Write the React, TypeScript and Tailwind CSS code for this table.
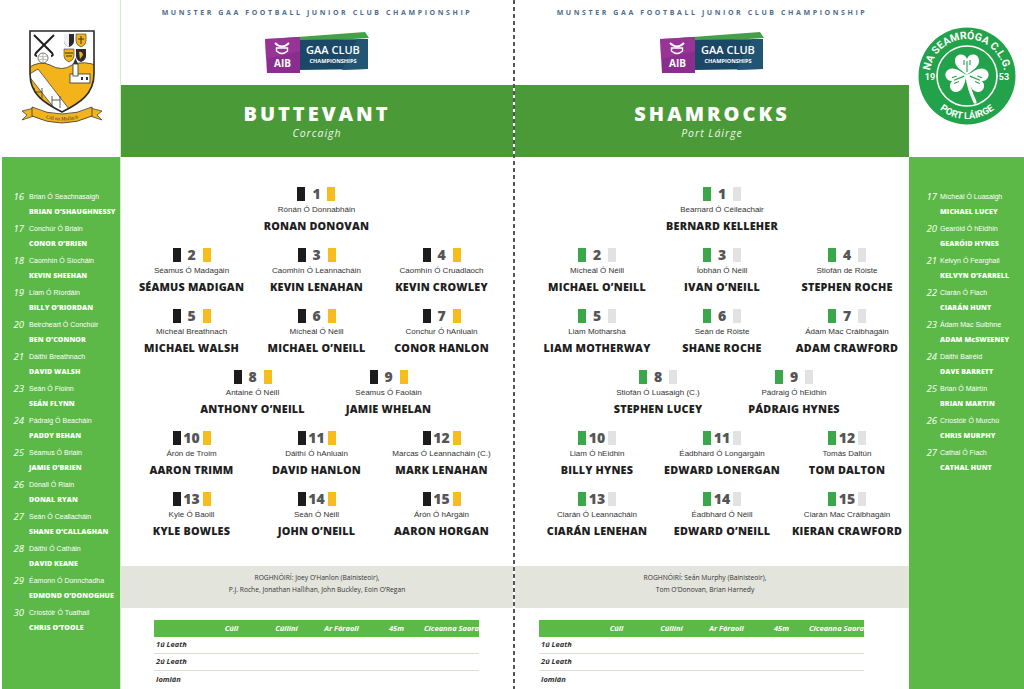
import React from "react";

type P = { n: number; ga: string; en: string };

const leftRows: P[][] = [
  [{ n: 1, ga: "Rónán Ó Donnabháin", en: "RONAN DONOVAN" }],
  [
    { n: 2, ga: "Séamus Ó Madagáin", en: "SÉAMUS MADIGAN" },
    { n: 3, ga: "Caomhín Ó Leannacháin", en: "KEVIN LENAHAN" },
    { n: 4, ga: "Caomhín Ó Cruadlaoch", en: "KEVIN CROWLEY" },
  ],
  [
    { n: 5, ga: "Mícheál Breathnach", en: "MICHAEL WALSH" },
    { n: 6, ga: "Mícheál Ó Néill", en: "MICHAEL O’NEILL" },
    { n: 7, ga: "Conchur Ó hAnluain", en: "CONOR HANLON" },
  ],
  [
    { n: 8, ga: "Antaine Ó Néill", en: "ANTHONY O’NEILL" },
    { n: 9, ga: "Séamus Ó Faoláin", en: "JAMIE WHELAN" },
  ],
  [
    { n: 10, ga: "Árón de Troim", en: "AARON TRIMM" },
    { n: 11, ga: "Dáithí Ó hAnluain", en: "DAVID HANLON" },
    { n: 12, ga: "Marcas Ó Leannacháin (C.)", en: "MARK LENAHAN" },
  ],
  [
    { n: 13, ga: "Kyle Ó Baoill", en: "KYLE BOWLES" },
    { n: 14, ga: "Seán Ó Néill", en: "JOHN O’NEILL" },
    { n: 15, ga: "Árón Ó hArgáin", en: "AARON HORGAN" },
  ],
];

const rightRows: P[][] = [
  [{ n: 1, ga: "Bearnard Ó Céileachair", en: "BERNARD KELLEHER" }],
  [
    { n: 2, ga: "Mícheál Ó Néill", en: "MICHAEL O’NEILL" },
    { n: 3, ga: "Íobhán Ó Néill", en: "IVAN O’NEILL" },
    { n: 4, ga: "Stiofán de Róiste", en: "STEPHEN ROCHE" },
  ],
  [
    { n: 5, ga: "Liam Motharsha", en: "LIAM MOTHERWAY" },
    { n: 6, ga: "Seán de Róiste", en: "SHANE ROCHE" },
    { n: 7, ga: "Ádam Mac Cráibhagáin", en: "ADAM CRAWFORD" },
  ],
  [
    { n: 8, ga: "Stiofán Ó Luasaigh (C.)", en: "STEPHEN LUCEY" },
    { n: 9, ga: "Pádraig Ó hEidhin", en: "PÁDRAIG HYNES" },
  ],
  [
    { n: 10, ga: "Liam Ó hEidhin", en: "BILLY HYNES" },
    { n: 11, ga: "Éadbhard Ó Longargáin", en: "EDWARD LONERGAN" },
    { n: 12, ga: "Tomás Daltún", en: "TOM DALTON" },
  ],
  [
    { n: 13, ga: "Ciarán Ó Leannacháin", en: "CIARÁN LENEHAN" },
    { n: 14, ga: "Éadbhard Ó Néill", en: "EDWARD O’NEILL" },
    { n: 15, ga: "Ciarán Mac Cráibhagáin", en: "KIERAN CRAWFORD" },
  ],
];

const leftSubs: P[] = [
  { n: 16, ga: "Brian Ó Seachnasaigh", en: "BRIAN O’SHAUGHNESSY" },
  { n: 17, ga: "Conchúr Ó Briain", en: "CONOR O’BRIEN" },
  { n: 18, ga: "Caomhín Ó Síocháin", en: "KEVIN SHEEHAN" },
  { n: 19, ga: "Liam Ó Ríordáin", en: "BILLY O’RIORDAN" },
  { n: 20, ga: "Beircheart Ó Conchúir", en: "BEN O’CONNOR" },
  { n: 21, ga: "Dáithí Breathnach", en: "DAVID WALSH" },
  { n: 23, ga: "Seán Ó Floinn", en: "SEÁN FLYNN" },
  { n: 24, ga: "Pádraig Ó Beacháin", en: "PADDY BEHAN" },
  { n: 25, ga: "Séamus Ó Briain", en: "JAMIE O’BRIEN" },
  { n: 26, ga: "Dónall Ó Riain", en: "DONAL RYAN" },
  { n: 27, ga: "Seán Ó Ceallacháin", en: "SHANE O’CALLAGHAN" },
  { n: 28, ga: "Dáithí Ó Catháin", en: "DAVID KEANE" },
  { n: 29, ga: "Éamonn Ó Donnchadha", en: "EDMOND O’DONOGHUE" },
  { n: 30, ga: "Críostóir Ó Tuathail", en: "CHRIS O’TOOLE" },
];

const rightSubs: P[] = [
  { n: 17, ga: "Mícheál Ó Luasaigh", en: "MICHAEL LUCEY" },
  { n: 20, ga: "Gearóid Ó hEidhin", en: "GEARÓID HYNES" },
  { n: 21, ga: "Kelvyn Ó Fearghail", en: "KELVYN O’FARRELL" },
  { n: 22, ga: "Ciarán Ó Fiach", en: "CIARÁN HUNT" },
  { n: 23, ga: "Ádam Mac Suibhne", en: "ADAM McSWEENEY" },
  { n: 24, ga: "Dáithí Bairéid", en: "DAVE BARRETT" },
  { n: 25, ga: "Brian Ó Máirtín", en: "BRIAN MARTIN" },
  { n: 26, ga: "Críostóir Ó Murchú", en: "CHRIS MURPHY" },
  { n: 27, ga: "Cathal Ó Fiach", en: "CATHAL HUNT" },
];

function Player({ p, c1, c2 }: { p: P; c1: string; c2: string }) {
  return (
    <div className="flex flex-col items-center">
      <div className="flex h-[14px] items-center">
        <span className={`block h-[14px] w-[8px] ${c1}`} />
        <span className="block w-[22px] text-center text-[14px] font-extrabold leading-[14px] text-[#555]">
          {p.n}
        </span>
        <span className={`block h-[14px] w-[8px] ${c2}`} />
      </div>
      <div className="mt-[4px] h-[10px] whitespace-nowrap font-['Liberation_Sans',sans-serif] text-[8px] leading-[10px] text-[#333]">
        {p.ga}
      </div>
      <div className="mt-[4px] h-[14px] whitespace-nowrap text-[10.8px] font-extrabold leading-[14px] tracking-[0.2px] text-[#1f1f1f]">
        {p.en}
      </div>
    </div>
  );
}

function Grid({ rows, c1, c2 }: { rows: P[][]; c1: string; c2: string }) {
  return (
    <div className="flex flex-col gap-[15px]">
      {rows.map((row, i) =>
        row.length === 3 ? (
          <div key={i} className="grid grid-cols-[125px_125px_125px] justify-center">
            {row.map((p) => (
              <Player key={p.n} p={p} c1={c1} c2={c2} />
            ))}
          </div>
        ) : row.length === 2 ? (
          <div key={i} className="flex justify-center pl-[8px]">
            {row.map((p) => (
              <div key={p.n} className="w-[136px]">
                <Player p={p} c1={c1} c2={c2} />
              </div>
            ))}
          </div>
        ) : (
          <div key={i} className="flex justify-center">
            <Player p={row[0]} c1={c1} c2={c2} />
          </div>
        )
      )}
    </div>
  );
}

function AibLogo() {
  return (
    <svg width="110" height="46" viewBox="0 0 110 46">
      <polygon points="22,9 103,3 107,9 26,14" fill="#45a149" />
      <polygon points="36,11 106,10 106,40 36,41" fill="#1b4866" />
      <polygon points="80,41 95,10 106,10 106,40" fill="#215573" />
      <polygon points="3,10 38,8 38,44 5,44" fill="#8b2d8e" />
      <polygon points="3,10 38,8 38,22 4,30" fill="#a23b9d" opacity="0.55" />
      <path d="M13 14 Q20 21 27 14" stroke="#fff" strokeWidth="1.8" fill="none" />
      <path d="M14.5 19 H25.5 V22 Q20 27 14.5 22 Z" stroke="#fff" strokeWidth="1.4" fill="none" />
      <text x="20.5" y="38" textAnchor="middle" fill="#fff" fontSize="10" fontWeight="700" fontFamily="Open Sans, sans-serif">
        AIB
      </text>
      <text x="71" y="25" textAnchor="middle" fill="#fff" fontSize="11" fontWeight="600" fontFamily="Open Sans, sans-serif">
        GAA CLUB
      </text>
      <text x="71" y="33.5" textAnchor="middle" fill="#fff" fontSize="5.6" fontWeight="700" fontFamily="Open Sans, sans-serif">
        CHAMPIONSHIPS
      </text>
    </svg>
  );
}

function ButtevantCrest() {
  const shield = "M12 3 H76 V46 C76 66 62 75 44 84 C26 75 12 66 12 46 Z";
  return (
    <svg width="90" height="98" viewBox="0 0 90 98">
      <defs>
        <clipPath id="shieldClip">
          <path d={shield} />
        </clipPath>
        <path id="ribbonText" d="M16 86 Q44 99 72 86" />
      </defs>
      <g clipPath="url(#shieldClip)">
        <rect x="0" y="0" width="90" height="90" fill="#fff" />
        <path d="M10 40 Q22 32 32 37 Q44 44 54 37 Q66 32 80 38 V90 H10 Z" fill="#f3b41b" stroke="#333" strokeWidth="0.8" />
        <path d="M10 47 L20 41 L58 90 L44 90 Z" fill="#fff" stroke="#333" strokeWidth="0.7" />
        <path d="M16 60 V70 M24 60 V70 M16 64 H24" stroke="#333" strokeWidth="0.8" />
        <path d="M34 68 V80 M42 68 V80 M34 72 H42" stroke="#333" strokeWidth="0.8" />
        <rect x="52" y="46" width="20" height="9" fill="#fff" stroke="#333" strokeWidth="0.8" />
        <rect x="55" y="36" width="5" height="12" fill="#fff" stroke="#333" strokeWidth="0.8" />
        <path d="M55 36 L57.5 30 L60 36 Z" fill="#333" />
        <rect x="63" y="49" width="2" height="3" fill="#333" />
        <rect x="68" y="49" width="2" height="3" fill="#333" />
      </g>
      <path d={shield} fill="none" stroke="#2a2a2a" strokeWidth="1.6" />
      <path d="M16 7 L34 25 Q36 28 33 28" stroke="#222" strokeWidth="2" fill="none" />
      <path d="M36 7 L18 25 Q16 28 19 28" stroke="#222" strokeWidth="2" fill="none" />
      <circle cx="25" cy="30" r="5" fill="#fff" stroke="#555" strokeWidth="0.8" />
      <path d="M21 28 Q25 30 29 28 M21 32 Q25 30 29 32 M25 25 V35" stroke="#777" strokeWidth="0.5" fill="none" />
      <path d="M46 6 H56 V13 Q56 17 51 19 Q46 17 46 13 Z" fill="#2b2b2b" />
      <path d="M46 6 H51 V19 Q46 17 46 13 Z" fill="#f0f0f0" />
      <path d="M58 6 H68 V13 Q68 17 63 19 Q58 17 58 13 Z" fill="#f3b41b" stroke="#333" strokeWidth="0.6" />
      <path d="M63 8 V16 M60 11 H66" stroke="#333" strokeWidth="1" />
      <path d="M46 21 H56 V28 Q56 32 51 34 Q46 32 46 28 Z" fill="#f3b41b" stroke="#333" strokeWidth="0.6" />
      <path d="M47 25 H55 M48 28 H54" stroke="#333" strokeWidth="1.2" />
      <path d="M58 21 H68 V28 Q68 32 63 34 Q58 32 58 28 Z" fill="#2b2b2b" />
      <path d="M61 24 Q64 23 65 27 L62 31 Z" fill="#f3b41b" />
      <path d="M16 80 L4 83 L9 87 L4 92 L16 88 Z" fill="#f3b41b" stroke="#333" strokeWidth="0.7" />
      <path d="M72 80 L84 83 L79 87 L84 92 L72 88 Z" fill="#f3b41b" stroke="#333" strokeWidth="0.7" />
      <path d="M14 79 Q44 93 74 79 L74 88 Q44 102 14 88 Z" fill="#f3b41b" stroke="#333" strokeWidth="0.8" />
      <text fontSize="5.2" fill="#333" fontFamily="Liberation Serif, serif" fontStyle="italic">
        <textPath href="#ribbonText" startOffset="50%" textAnchor="middle">
          Cill na Mullach
        </textPath>
      </text>
    </svg>
  );
}

function Leaf({ r }: { r: number }) {
  return (
    <g transform={`translate(50 49) rotate(${r})`}>
      <path
        d="M0 0 C-4 -4 -13 -8 -12 -15 C-11 -22 -2 -22 0 -16 C2 -22 11 -22 12 -15 C13 -8 4 -4 0 0 Z"
        fill="#fff"
      />
      <path d="M0 -3 V-14 M-3 -10 V-15 M3 -10 V-15" stroke="#22a24a" strokeWidth="1.1" />
    </g>
  );
}

function ShamrockCrest() {
  return (
    <svg width="100" height="100" viewBox="0 0 100 100">
      <defs>
        <path id="topArc" d="M 14.6 63 A 37.5 37.5 0 1 1 85.4 63" />
        <path id="botArc" d="M 7 50 A 43 43 0 0 0 93 50" />
      </defs>
      <circle cx="50" cy="50" r="48.5" fill="#22a24a" />
      <circle cx="50" cy="50" r="30" fill="none" stroke="#fff" strokeWidth="1.6" />
      <text fontSize="10.5" fontWeight="700" fill="#fff" fontFamily="Roboto, Arial, sans-serif">
        <textPath href="#topArc" startOffset="50%" textAnchor="middle">
          NA SEAMRÓGA C.L.G.
        </textPath>
      </text>
      <text fontSize="9.5" fontWeight="700" fill="#fff" fontFamily="Roboto, Arial, sans-serif">
        <textPath href="#botArc" startOffset="50%" textAnchor="middle">
          PORT LÁIRGE
        </textPath>
      </text>
      <text x="13" y="54" textAnchor="middle" fontSize="9" fontWeight="700" fill="#fff" fontFamily="Roboto, Arial, sans-serif">
        19
      </text>
      <text x="87" y="54" textAnchor="middle" fontSize="9" fontWeight="700" fill="#fff" fontFamily="Roboto, Arial, sans-serif">
        53
      </text>
      <path d="M50 50 Q52 64 58 76" stroke="#fff" strokeWidth="3.2" fill="none" strokeLinecap="round" />
      <Leaf r={0} />
      <Leaf r={-112} />
      <Leaf r={112} />
    </svg>
  );
}

function Sub({ p, numW, gap }: { p: P; numW: string; gap: string }) {
  return (
    <div className="flex flex-col gap-[2px]">
      <div className="flex h-[13px] items-center">
        <span className={`${numW} text-right text-[9.5px] italic leading-[13px] text-white`}>{p.n}</span>
        <span className={`${gap} whitespace-nowrap font-['Liberation_Sans',sans-serif] text-[7px] leading-[13px] text-white`}>
          {p.ga}
        </span>
      </div>
      <div className="flex h-[13px] items-center">
        <span className={numW} />
        <span className={`${gap} whitespace-nowrap text-[7px] font-extrabold leading-[13px] tracking-[0.1px] text-white`}>
          {p.en}
        </span>
      </div>
    </div>
  );
}

function ScoreTable({ ml }: { ml: string }) {
  const heads = ["Cúil", "Cúilíní", "Ar Fóraoil", "45m", "Cíceanna Saora"];
  const rows = ["1ú Leath", "2ú Leath", "Iomlán"];
  return (
    <div className={`${ml} w-[325px]`}>
      <div className="grid h-[17px] grid-cols-[50px_55px_55px_55px_55px_55px] items-center bg-[#5cb947]">
        <span />
        {heads.map((h) => (
          <span key={h} className="whitespace-nowrap text-center text-[7.5px] font-bold italic text-white">
            {h}
          </span>
        ))}
      </div>
      {rows.map((r, i) => (
        <div
          key={r}
          className={`flex h-[17px] items-center pl-[2px] text-[7.5px] font-bold italic text-[#333] ${
            i < 2 ? "border-b border-[#dcdcd4]" : ""
          }`}
        >
          {r}
        </div>
      ))}
    </div>
  );
}

function TeamMain({
  name,
  county,
  rows,
  c1,
  c2,
  gridPad,
  rogh,
  roghPad,
  tableMl,
}: {
  name: string;
  county: string;
  rows: P[][];
  c1: string;
  c2: string;
  gridPad: string;
  rogh: [string, string];
  roghPad: string;
  tableMl: string;
}) {
  return (
    <div className="flex h-full flex-col">
      <div className="flex h-[85px] flex-col items-center">
        <div className="pt-[9px] text-[7px] font-bold leading-[8px] tracking-[2.6px] text-[#4d6d8c]">
          MUNSTER GAA FOOTBALL JUNIOR CLUB CHAMPIONSHIP
        </div>
        <div className="mt-[12px]">
          <AibLogo />
        </div>
      </div>
      <div className="flex h-[72px] flex-col items-center bg-[#4a9a38] pt-[18px]">
        <div className="text-[20px] font-extrabold leading-[22px] tracking-[3px] text-white">{name}</div>
        <div className="mt-[2px] text-[10.5px] italic leading-[12px] tracking-[1px] text-[#eef6ea]">{county}</div>
      </div>
      <div className={`h-[409px] pt-[30px] ${gridPad}`}>
        <Grid rows={rows} c1={c1} c2={c2} />
      </div>
      <div className={`h-[42px] bg-[#e3e4dc] pt-[6px] text-center text-[6.7px] leading-[12px] text-[#333] ${roghPad}`}>
        <div>{rogh[0]}</div>
        <div>{rogh[1]}</div>
      </div>
      <div className="pt-[12px]">
        <ScoreTable ml={tableMl} />
      </div>
    </div>
  );
}

export default function App() {
  return (
    <div className="flex h-[689px] w-[1024px] overflow-hidden bg-white font-['Open_Sans','Liberation_Sans',sans-serif]">
      <div className="flex w-[120px] flex-col">
        <div className="h-[157px] pl-[18px] pt-[28px]">
          <ButtevantCrest />
        </div>
        <div className="flex-1 pl-[2px]">
          <div className="flex h-full flex-col gap-[4px] bg-[#5cb947] pt-[33px]">
            {leftSubs.map((p) => (
              <Sub key={p.n} p={p} numW="w-[22px]" gap="ml-[5px]" />
            ))}
          </div>
        </div>
      </div>
      <div className="w-[393px] border-l border-[#d6ecce]">
        <TeamMain
          name="BUTTEVANT"
          county="Corcaigh"
          rows={leftRows}
          c1="bg-[#1c1c1c]"
          c2="bg-[#f7bd1e]"
          gridPad="pr-[1px]"
          rogh={["ROGHNÓIRÍ: Joey O’Hanlon (Bainisteoir),", "P.J. Roche, Jonathan Hallihan, John Buckley, Eoin O’Regan"]}
          roghPad=""
          tableMl="ml-[33px]"
        />
      </div>
      <div className="w-[2px] bg-[repeating-linear-gradient(to_bottom,#555_0px,#555_4px,transparent_4px,transparent_7px)]" />
      <div className="w-[394px]">
        <TeamMain
          name="SHAMROCKS"
          county="Port Láirge"
          rows={rightRows}
          c1="bg-[#3aa84a]"
          c2="bg-[#e2e2e2]"
          gridPad="pl-[20px]"
          rogh={["ROGHNÓIRÍ: Seán Murphy (Bainisteoir),", "Tom O’Donovan, Brian Harnedy"]}
          roghPad="pr-[14px]"
          tableMl="ml-[24px]"
        />
      </div>
      <div className="flex w-[115px] flex-col">
        <div className="h-[157px] pl-[8px] pt-[26px]">
          <ShamrockCrest />
        </div>
        <div className="flex flex-1 flex-col gap-[4px] bg-[#5cb947] pt-[33px]">
          {rightSubs.map((p) => (
            <Sub key={p.n} p={p} numW="w-[28px]" gap="ml-[3px]" />
          ))}
        </div>
      </div>
    </div>
  );
}
